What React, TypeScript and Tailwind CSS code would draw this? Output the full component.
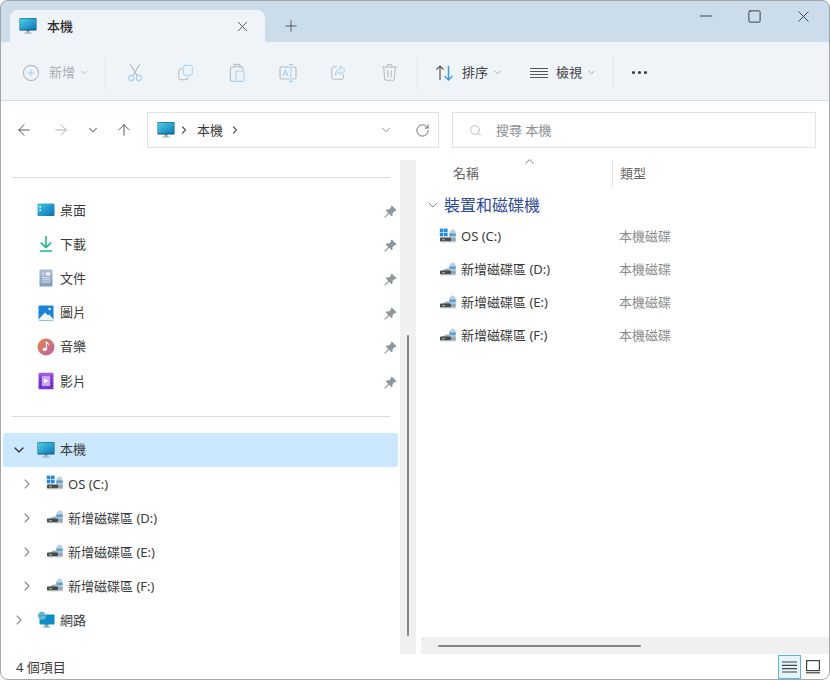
import type { ReactNode } from "react";
import {
  ArrowLeft,
  ArrowRight,
  ArrowUp,
  ChevronDown,
  ChevronRight,
  ChevronUp,
  Minus,
  Plus,
  RotateCw,
  Search,
  Square,
  X,
} from "lucide-react";

// Two-tone Windows 11 glyphs: gray outline + light blue accent, as in the disabled command bar.
const GRAY = "#b4b9bd";
const ACCENT = "#a9d0ee";

function Glyph({ children, size = 20 }: { children: ReactNode; size?: number }) {
  return (
    <svg width={size} height={size} viewBox="0 0 20 20" fill="none" strokeWidth="1.1" strokeLinecap="round" strokeLinejoin="round">
      {children}
    </svg>
  );
}

function PcIcon() {
  return (
    <svg width="18" height="18" viewBox="0 0 18 18" className="shrink-0">
      <defs>
        <linearGradient id="pcScreen" x1="0" y1="0" x2="1" y2="1">
          <stop offset="0" stopColor="#4fd0e6" />
          <stop offset="1" stopColor="#0a78b8" />
        </linearGradient>
      </defs>
      <rect x="7.5" y="13" width="3" height="3" fill="#8fa3ad" />
      <rect x="5" y="15.6" width="8" height="1" fill="#a5b4bc" />
      <rect x="0.5" y="1" width="17" height="12.6" rx="1.2" fill="#0c4f7c" />
      <rect x="0.9" y="1.4" width="16.2" height="11.2" rx="0.8" fill="url(#pcScreen)" />
    </svg>
  );
}

function DesktopIcon() {
  return (
    <svg width="18" height="18" viewBox="0 0 18 18" className="shrink-0">
      <defs>
        <linearGradient id="deskFill" x1="0" y1="0" x2="1" y2="1">
          <stop offset="0" stopColor="#3fc6e2" />
          <stop offset="1" stopColor="#0b6fb5" />
        </linearGradient>
      </defs>
      <rect x="0.5" y="2.5" width="17" height="12.5" rx="1" fill="url(#deskFill)" />
      <rect x="2.4" y="5" width="1.7" height="1.7" fill="#e6f7fb" />
      <rect x="2.4" y="8.4" width="1.7" height="1.7" fill="#e6f7fb" />
    </svg>
  );
}

function DownloadIcon() {
  return (
    <svg width="18" height="18" viewBox="0 0 18 18" fill="none" stroke="#1fb589" strokeWidth="1.6" className="shrink-0">
      <path d="M9 1v11" />
      <path d="M3.8 7.6 9 12.6l5.2-5" />
      <path d="M2.8 16h12.4" />
    </svg>
  );
}

function DocIcon() {
  return (
    <svg width="18" height="18" viewBox="0 0 18 18" className="shrink-0">
      <defs>
        <linearGradient id="docFill" x1="0" y1="0" x2="0" y2="1">
          <stop offset="0" stopColor="#aebfd2" />
          <stop offset="1" stopColor="#7d9bbb" />
        </linearGradient>
      </defs>
      <rect x="2.5" y="0.5" width="13" height="17" rx="0.8" fill="url(#docFill)" />
      <rect x="8.8" y="3.5" width="4.4" height="3" fill="#f2f6fa" />
      <path d="M4.8 4h2.8M4.8 6h2.8M4.8 8.6h8.4M4.8 10.8h8.4M4.8 13h8.4" stroke="#f2f6fa" strokeWidth="0.8" />
    </svg>
  );
}

function PictureIcon() {
  return (
    <svg width="18" height="18" viewBox="0 0 18 18" className="shrink-0">
      <rect x="1.5" y="1.5" width="15" height="15" rx="1" fill="#1a84d8" />
      <circle cx="12.6" cy="5" r="1.2" fill="#fff" />
      <path d="M1.5 15.5 8 8.4l3 2.8 1.2-.8 4.3 5.1v.5h-15z" fill="#f1f8fd" />
    </svg>
  );
}

function MusicIcon() {
  return (
    <svg width="18" height="18" viewBox="0 0 18 18" className="shrink-0">
      <defs>
        <linearGradient id="musicFill" x1="0" y1="0" x2="1" y2="1">
          <stop offset="0" stopColor="#ec8347" />
          <stop offset="1" stopColor="#b662ac" />
        </linearGradient>
      </defs>
      <circle cx="9" cy="9" r="8.5" fill="url(#musicFill)" />
      <path d="M9.4 3.8v7.2" stroke="#fff" strokeWidth="1.3" />
      <path d="M9.4 3.8c.6 1.6 2 1.8 2.6 3" stroke="#fff" strokeWidth="1.1" fill="none" />
      <ellipse cx="7.7" cy="11.4" rx="2.1" ry="1.7" fill="#fff" />
    </svg>
  );
}

function VideoIcon() {
  return (
    <svg width="18" height="18" viewBox="0 0 18 18" className="shrink-0">
      <defs>
        <linearGradient id="videoFill" x1="0" y1="0" x2="0" y2="1">
          <stop offset="0" stopColor="#a45ff0" />
          <stop offset="1" stopColor="#6f35c9" />
        </linearGradient>
      </defs>
      <rect x="1.5" y="0.8" width="15" height="16.4" rx="1" fill="url(#videoFill)" />
      <rect x="5" y="4" width="8" height="10" fill="#c9a4f7" />
      <path d="M7.2 6.4v5.2l4.2-2.6z" fill="#fff" />
      <path d="M3.2 3.4v1.4M3.2 6.8v1.4M3.2 10v1.4M3.2 13.2v1.4M14.8 3.4v1.4M14.8 6.8v1.4M14.8 10v1.4M14.8 13.2v1.4" stroke="#3b1a80" strokeWidth="1.2" />
    </svg>
  );
}

function NetworkIcon() {
  return (
    <svg width="18" height="18" viewBox="0 0 18 18" className="shrink-0">
      <rect x="7.5" y="13" width="4" height="3" fill="#7fa0b0" />
      <rect x="5.5" y="15.6" width="8" height="1" fill="#9ab2be" />
      <rect x="2.5" y="3.5" width="15" height="10" rx="0.8" fill="#0f8fc6" />
      <circle cx="4.8" cy="4.8" r="4" fill="#7dc9e0" />
      <path d="M1 4.8h7.6M4.8 1c-2.2 2.4-2.2 5.2 0 7.6M4.8 1c2.2 2.4 2.2 5.2 0 7.6" stroke="#2a7fa6" strokeWidth="0.6" fill="none" />
    </svg>
  );
}

// small drive: dark slab with a light blue lock-like bump on top, as the Win11 data drive icon
function DriveIcon({ system = false }: { system?: boolean }) {
  return (
    <svg width="18" height="18" viewBox="0 0 18 18" className="shrink-0">
      <path d="M10 7c0-3.4 1.8-5.6 3.8-5.6 1.7 0 2.9 1.4 2.9 3.4v8.4H10z" fill="#bcd2e3" />
      <path d="M10.4 5.4h6.3v2.8h-6.3z" fill="#5f9fd4" />
      {system ? (
        <>
          <rect x="0.8" y="0.6" width="3.6" height="3.6" fill="#2389e0" />
          <rect x="5" y="0.6" width="3.6" height="3.6" fill="#2389e0" />
          <rect x="0.8" y="4.8" width="3.6" height="3.6" fill="#2389e0" />
          <rect x="5" y="4.8" width="3.6" height="3.6" fill="#2389e0" />
        </>
      ) : (
        <path d="M2.6 10.2 7 7.6h3.6v2.6z" fill="#9fb1bd" />
      )}
      <rect x="1" y="9.6" width="11" height="4" rx="0.8" fill="#454b50" />
      <rect x="3" y="11.2" width="3" height="1" fill="#b3d06e" />
      <rect x="12" y="9.6" width="4.7" height="4" fill="#9aa7b1" />
      <rect x="1" y="13.6" width="15.7" height="0.8" fill="#c6ced4" />
    </svg>
  );
}

function PinIcon() {
  return (
    <svg width="13" height="13" viewBox="0 0 12 12" className="shrink-0" fill="#8f979e">
      <path d="M7.2.4 11.6 4.8l-1 1-.8-.3L7.8 7.5l.2 1.9-1 1-2.3-2.3L1 11.8l-.8-.8 3.7-3.7L1.6 5l1-1 1.9.2 2-2-.3-.8z" />
    </svg>
  );
}

function ToolButton({ children }: { children: ReactNode }) {
  return <div className="flex w-[51px] shrink-0 items-center justify-center">{children}</div>;
}

function ToolDivider({ className }: { className: string }) {
  return <div className={`h-8 w-px shrink-0 bg-[#dfe6ec] ${className}`} />;
}

const PINNED: { label: string; icon: ReactNode }[] = [
  { label: "桌面", icon: <DesktopIcon /> },
  { label: "下載", icon: <DownloadIcon /> },
  { label: "文件", icon: <DocIcon /> },
  { label: "圖片", icon: <PictureIcon /> },
  { label: "音樂", icon: <MusicIcon /> },
  { label: "影片", icon: <VideoIcon /> },
];

const DRIVES = [
  { label: "OS (C:)", system: true },
  { label: "新增磁碟區 (D:)", system: false },
  { label: "新增磁碟區 (E:)", system: false },
  { label: "新增磁碟區 (F:)", system: false },
];

export default function App() {
  return (
    <div className="flex h-[680px] w-[830px] flex-col overflow-hidden rounded-[8px] bg-white text-[13px] leading-none text-[#3a3a3a] outline-1 -outline-offset-1 outline-[#a3a7aa] [font-family:'Noto_Sans','Noto_Sans_CJK_TC',sans-serif]">
      {/* title bar + tab */}
      <div className="flex h-[42px] shrink-0 bg-[#cbdcea] pl-[10px] pt-[10px]">
        <div className="flex h-[32px] w-[255px] items-center rounded-t-[8px] bg-[#eff4f9] pl-[9px] pr-[14px]">
          <PcIcon />
          <span className="ml-[10px] font-medium text-[#2b2b2b]">本機</span>
          <X size={17} strokeWidth={1.2} className="ml-auto text-[#444]" />
        </div>
        <Plus size={18} strokeWidth={1.1} className="ml-[17px] mt-[7px] text-[#444]" />
        <div className="-mt-[10px] ml-auto flex h-[32px] items-center pr-[2px] text-[#333]">
          <div className="flex w-[48px] justify-center">
            <Minus size={20} strokeWidth={1.1} />
          </div>
          <div className="flex w-[49px] justify-center">
            <Square size={15} strokeWidth={1.5} />
          </div>
          <div className="flex w-[49px] justify-center">
            <X size={19} strokeWidth={1.1} />
          </div>
        </div>
      </div>

      {/* command bar */}
      <div className="flex h-[59px] shrink-0 items-center border-b border-[#cfdbe5] bg-[#eff4f9] pl-[22px] pt-[3px]">
        <svg width="18" height="18" viewBox="0 0 18 18" fill="none" stroke={GRAY} strokeWidth="1.1" className="shrink-0">
          <circle cx="9" cy="9" r="7.6" />
          <path d="M9 5.4v7.2M5.4 9h7.2" stroke={ACCENT} />
        </svg>
        <span className="ml-[9px] text-[#a7acb1]">新增</span>
        <ChevronDown size={11} className="ml-[4px] text-[#b5babf]" />
        <ToolDivider className="ml-[15px] mr-[3px]" />
        <ToolButton>
          <Glyph size={20}>
            <path d="M5.5 1.5 12 12.5M14.5 1.5 8 12.5" stroke={GRAY} />
            <circle cx="6.2" cy="15" r="2.6" stroke={ACCENT} />
            <circle cx="13.8" cy="15" r="2.6" stroke={ACCENT} />
          </Glyph>
        </ToolButton>
        <ToolButton>
          <Glyph size={18}>
            <rect x="7" y="1.5" width="10" height="11" rx="2.2" stroke={ACCENT} />
            <path d="M5 5.5H4.2A2.2 2.2 0 0 0 2 7.7v7.6a2.2 2.2 0 0 0 2.2 2.2h5.6a2.2 2.2 0 0 0 2.2-2.2v-.3" stroke={GRAY} />
          </Glyph>
        </ToolButton>
        <ToolButton>
          <Glyph size={20}>
            <path d="M6.5 4H5a1.6 1.6 0 0 0-1.6 1.6v11A1.6 1.6 0 0 0 5 18.2h3" stroke={GRAY} />
            <path d="M7 3.8h6V2.4a1 1 0 0 0-1-1H8a1 1 0 0 0-1 1zM13 4h1.4A1.6 1.6 0 0 1 16 5.6V7" stroke={GRAY} />
            <rect x="9" y="8" width="8" height="10.4" rx="1.4" stroke={ACCENT} />
          </Glyph>
        </ToolButton>
        <ToolButton>
          <Glyph size={20}>
            <path d="M11 4H3.6A1.6 1.6 0 0 0 2 5.6v8.8A1.6 1.6 0 0 0 3.6 16H11M15 4h1.4A1.6 1.6 0 0 1 18 5.6v8.8a1.6 1.6 0 0 1-1.6 1.6H15" stroke={GRAY} />
            <path d="M13 1.5v17M11.2 1.5h3.6M11.2 18.5h3.6" stroke={ACCENT} />
            <path d="M5 13l2.5-6L10 13M5.9 11h3.2" stroke={ACCENT} />
          </Glyph>
        </ToolButton>
        <ToolButton>
          <Glyph size={18}>
            <path d="M7 3H4.2A2.2 2.2 0 0 0 2 5.2v9.6A2.2 2.2 0 0 0 4.2 17h8.6a2.2 2.2 0 0 0 2.2-2.2V12" stroke={GRAY} />
            <path d="M11.5 2.5 17 7.2l-5.5 4.6V9c-3 0-4.5 1.2-5.5 3.5C6 8.5 8 5.6 11.5 5.4z" stroke={ACCENT} />
          </Glyph>
        </ToolButton>
        <ToolButton>
          <Glyph size={19}>
            <path d="M2.5 4.2h15M7.5 4V2.8a1.2 1.2 0 0 1 1.2-1.2h2.6a1.2 1.2 0 0 1 1.2 1.2V4" stroke={GRAY} />
            <path d="M4 4.5l.8 12a1.8 1.8 0 0 0 1.8 1.7h6.8a1.8 1.8 0 0 0 1.8-1.7l.8-12" stroke={GRAY} />
            <path d="M8.2 8v6.5M11.8 8v6.5" stroke={GRAY} />
          </Glyph>
        </ToolButton>
        <ToolDivider className="ml-[2px]" />
        <svg width="19" height="18" viewBox="0 0 19 18" fill="none" strokeWidth="1.2" className="ml-[17px] shrink-0">
          <path d="M5 16V2M1.4 5.6 5 2l3.6 3.6" stroke="#555" />
          <path d="M13.5 2v14M9.6 12l3.9 4 3.9-4" stroke="#3d9be6" strokeWidth="1.5" />
        </svg>
        <span className="ml-[8px] text-[#3f3f3f]">排序</span>
        <ChevronDown size={11} className="ml-[4px] text-[#9aa0a5]" />
        <svg width="18" height="12" viewBox="0 0 18 12" fill="none" stroke="#555" strokeWidth="1" className="ml-[27px] shrink-0">
          <path d="M0 1.5h18M0 4.5h18M0 7.5h18M0 10.5h18" />
        </svg>
        <span className="ml-[8px] text-[#3f3f3f]">檢視</span>
        <ChevronDown size={11} className="ml-[4px] text-[#9aa0a5]" />
        <ToolDivider className="ml-[16px]" />
        <div className="ml-[18px] flex gap-[3px]">
          <span className="size-[3px] rounded-full bg-[#333]" />
          <span className="size-[3px] rounded-full bg-[#333]" />
          <span className="size-[3px] rounded-full bg-[#333]" />
        </div>
      </div>

      {/* address row */}
      <div className="flex h-[59px] shrink-0 items-center pl-[15px] pr-[14px] pb-[1px]">
        <ArrowLeft size={18} strokeWidth={1.3} className="shrink-0 text-[#555]" />
        <ArrowRight size={18} strokeWidth={1.3} className="ml-[19px] shrink-0 text-[#a9adb1]" />
        <ChevronDown size={14} strokeWidth={1.8} className="ml-[16px] shrink-0 text-[#666]" />
        <ArrowUp size={18} strokeWidth={1.3} className="ml-[15px] shrink-0 text-[#555]" />
        <div className="ml-[14px] flex h-[36px] w-[292px] shrink-0 items-center border border-[#dfe1e3] pl-[9px]">
          <PcIcon />
          <ChevronRight size={12} strokeWidth={2.4} className="ml-[3px] text-[#555]" />
          <span className="ml-[7px]">本機</span>
          <ChevronRight size={12} strokeWidth={2.4} className="ml-[6px] text-[#555]" />
          <ChevronDown size={14} strokeWidth={1.4} className="ml-[138px] text-[#777]" />
          <RotateCw size={15} strokeWidth={1.5} className="ml-[22px] text-[#666]" />
        </div>
        <div className="ml-[13px] flex h-[36px] flex-1 items-center border border-[#dfe1e3] pl-[16px] text-[#8c8f92]">
          <Search size={13} strokeWidth={1.3} className="text-[#a5a8ab]" />
          <span className="ml-[14px]">搜尋 本機</span>
        </div>
      </div>

      {/* body */}
      <div className="flex h-[494px] shrink-0">
        {/* nav pane */}
        <div className="w-[400px] shrink-0">
          <div className="ml-[12px] mt-[17px] h-px w-[378px] bg-[#dcdcdc]" />
          <div className="mt-[15px]">
            {PINNED.map((p) => (
              <div key={p.label} className="flex h-[34.2px] items-center pl-[37px] pr-[3px]">
                {p.icon}
                <span className="ml-[5px]">{p.label}</span>
                <span className="ml-auto mt-[2px]">
                  <PinIcon />
                </span>
              </div>
            ))}
          </div>
          <div className="ml-[12px] mt-[18px] h-px w-[378px] bg-[#dcdcdc]" />
          <div className="ml-[3px] mt-[16px] flex h-[34px] w-[395px] items-center rounded-[2px] bg-[#cce8ff] pb-[1px] pl-[8px]">
            <ChevronDown size={16} strokeWidth={2} className="text-[#333]" />
            <span className="ml-[10px]">
              <PcIcon />
            </span>
            <span className="ml-[5px]">本機</span>
          </div>
          {DRIVES.map((d) => (
            <div key={d.label} className="flex h-[34px] items-center pl-[19px]">
              <ChevronRight size={16} strokeWidth={1.6} className="text-[#8a8a8a]" />
              <span className="ml-[11px]">
                <DriveIcon system={d.system} />
              </span>
              <span className="ml-[4px]">{d.label}</span>
            </div>
          ))}
          <div className="flex h-[34px] items-center pl-[11px]">
            <ChevronRight size={16} strokeWidth={1.6} className="text-[#8a8a8a]" />
            <span className="ml-[10px]">
              <NetworkIcon />
            </span>
            <span className="ml-[5px]">網路</span>
          </div>
        </div>

        {/* nav scrollbar */}
        <div className="w-[16px] shrink-0 bg-[#f0f0f0] pl-[7px] pt-[175px]">
          <div className="h-[301px] w-[2px] rounded-full bg-[#858585]" />
        </div>

        {/* file list */}
        <div className="flex min-w-0 flex-1 flex-col">
          <div className="flex h-[27px] shrink-0">
            <span className="ml-[37px] mt-[7px] text-[#666]">名稱</span>
            <ChevronUp size={15} strokeWidth={1.5} className="ml-[43px] -mt-[6px] text-[#777]" />
            <div className="ml-[75px] h-[27px] w-px bg-[#e5e5e5]" />
            <span className="ml-[7px] mt-[7px] text-[#666]">類型</span>
          </div>
          <div className="mt-[7px] flex h-[22px] shrink-0 items-center pl-[9px] text-[#2f4b96]">
            <ChevronDown size={16} strokeWidth={1.1} className="text-[#666]" />
            <span className="ml-[3px] text-[16px]">裝置和磁碟機</span>
          </div>
          <div className="mt-[4px]">
            {DRIVES.map((d) => (
              <div key={d.label} className="flex h-[33px] items-center pl-[23px]">
                <DriveIcon system={d.system} />
                <span className="ml-[4px] w-[158px]">{d.label}</span>
                <span className="text-[#8c8c8c]">本機磁碟</span>
              </div>
            ))}
          </div>
          {/* horizontal scrollbar */}
          <div className="ml-[5px] mt-auto h-[17px] shrink-0 bg-[#f0f0f0] pl-[17px] pt-[8px]">
            <div className="h-[2px] w-[203px] rounded-full bg-[#858585]" />
          </div>
        </div>
      </div>

      {/* status bar */}
      <div className="flex min-h-0 flex-1 items-center pl-[16px] pr-[10px]">
        <span>4 個項目</span>
        <div className="ml-auto flex h-[24px] w-[23px] items-center justify-center border border-[#5cb4e6] bg-[#e5f3fb]">
          <svg width="15" height="12" viewBox="0 0 15 12" fill="none" stroke="#444" strokeWidth="1.2">
            <path d="M0 1h15M0 4.3h15M0 7.6h15M0 11h15" />
          </svg>
        </div>
        <svg width="14" height="14" viewBox="0 0 14 14" fill="none" className="ml-[5px]">
          <rect x="0.6" y="0.6" width="12.8" height="10" stroke="#444" strokeWidth="1.2" />
          <path d="M0 12.8h14" stroke="#666" strokeWidth="1.6" />
        </svg>
      </div>
    </div>
  );
}
